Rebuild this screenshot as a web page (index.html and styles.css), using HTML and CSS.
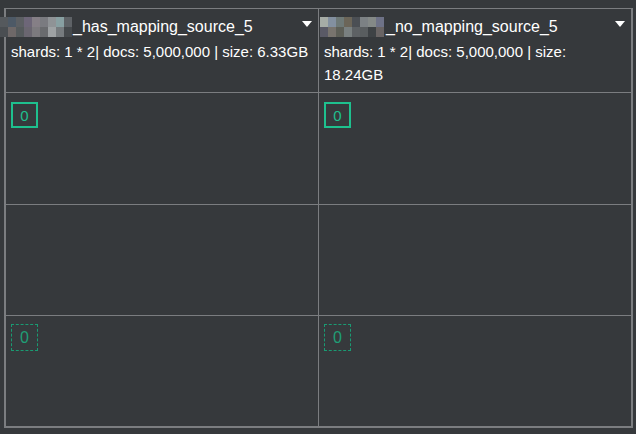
FILE: index.html
```html
<!DOCTYPE html>
<html lang="en">
<head>
    <meta charset="UTF-8">
    <meta name="viewport" content="width=device-width, initial-scale=1.0">
    <title>Shards</title>
    <link rel="stylesheet" href="styles.css">
</head>
<body>
    <div class="board">
        <!-- header row -->
        <div class="cell head">
            <div class="head-title">
                <span class="name"><span class="mosaic mosaic-a"><i></i><i></i><i></i><i></i><i></i><i></i><i></i><i></i><i></i><i></i><i></i><i></i><i></i><i></i><i></i><i></i><i></i><i></i></span>_has_mapping_source_5</span>
                <span class="caret"></span>
            </div>
            <div class="head-stats">shards: 1 * 2| docs: 5,000,000 | size: 6.33GB</div>
        </div>
        <div class="cell head">
            <div class="head-title">
                <span class="name"><span class="mosaic mosaic-b"><i></i><i></i><i></i><i></i><i></i><i></i><i></i><i></i><i></i><i></i><i></i><i></i><i></i><i></i><i></i><i></i></span>_no_mapping_source_5</span>
                <span class="caret"></span>
            </div>
            <div class="head-stats">shards: 1 * 2| docs: 5,000,000 | size: 18.24GB</div>
        </div>

        <!-- primary shards -->
        <div class="cell body-cell"><span class="shard primary">0</span></div>
        <div class="cell body-cell"><span class="shard primary">0</span></div>

        <!-- empty row -->
        <div class="cell"></div>
        <div class="cell"></div>

        <!-- replicas -->
        <div class="cell body-cell replica-row"><span class="shard replica">0</span></div>
        <div class="cell body-cell replica-row"><span class="shard replica">0</span></div>
    </div>
</body>
</html>
```

FILE: styles.css
```css
body {
    margin: 0;
    padding: 0;
    background-color: #36393c;
    font-family: "Liberation Sans", Arial, sans-serif;
    color: #ffffff;
    height: 434px;
    overflow: hidden;
}

.board {
    margin: 8px 0 0 4px;
    padding: 1px 2px 2px 2px;
    width: 625px;
    display: grid;
    grid-template-columns: 312px 312px;
    grid-template-rows: 83px 111px 110px 110px;
    gap: 1px;
    background-color: #7b7d80;
}

.cell {
    background-color: #36393c;
}

.head {
    padding: 5px 6px 0 5px;
}

.head-title {
    display: flex;
    justify-content: space-between;
    align-items: flex-start;
    font-size: 16px;
    line-height: 26px;
    white-space: nowrap;
}

.caret {
    width: 0;
    height: 0;
    margin-top: 7px;
    border-left: 5px solid transparent;
    border-right: 5px solid transparent;
    border-top: 6px solid #ffffff;
}

.head-stats {
    font-size: 15px;
    line-height: 23px;
}

/* redacted part of the index name */
.mosaic {
    display: inline-grid;
    grid-template-columns: repeat(9, 8px);
    grid-template-rows: 10px 10px;
    vertical-align: top;
    position: relative;
    top: 3px;
    filter: blur(0.6px);
}

.mosaic i {
    display: block;
}

.mosaic-a {
    margin-left: -11px;
    margin-right: 1px;
}

.mosaic-a i:nth-child(1) { background: #55595d; }
.mosaic-a i:nth-child(2) { background: #4d5966; }
.mosaic-a i:nth-child(3) { background: #5c5f63; }
.mosaic-a i:nth-child(4) { background: #6d6678; }
.mosaic-a i:nth-child(5) { background: #857f86; }
.mosaic-a i:nth-child(6) { background: #7a7b80; }
.mosaic-a i:nth-child(7) { background: #8f9396; }
.mosaic-a i:nth-child(8) { background: #88a0a2; }
.mosaic-a i:nth-child(9) { background: #5e6266; }
.mosaic-a i:nth-child(10) { background: #4a4e52; }
.mosaic-a i:nth-child(11) { background: #6e6868; }
.mosaic-a i:nth-child(12) { background: #555a5c; }
.mosaic-a i:nth-child(13) { background: #6a6670; }
.mosaic-a i:nth-child(14) { background: #7c7a7e; }
.mosaic-a i:nth-child(15) { background: #696b6e; }
.mosaic-a i:nth-child(16) { background: #9ea2a4; }
.mosaic-a i:nth-child(17) { background: #767b7e; }
.mosaic-a i:nth-child(18) { background: #45494c; }

.mosaic-b {
    grid-template-columns: repeat(8, 8px);
    margin-left: -4px;
    margin-right: 2px;
}

.mosaic-b i:nth-child(1) { background: #a6aca6; }
.mosaic-b i:nth-child(2) { background: #8390a0; }
.mosaic-b i:nth-child(3) { background: #6e7977; }
.mosaic-b i:nth-child(4) { background: #6b6558; }
.mosaic-b i:nth-child(5) { background: #4b4f54; }
.mosaic-b i:nth-child(6) { background: #7c8184; }
.mosaic-b i:nth-child(7) { background: #848987; }
.mosaic-b i:nth-child(8) { background: #6e7287; }
.mosaic-b i:nth-child(9) { background: #5a5a66; }
.mosaic-b i:nth-child(10) { background: #78746e; }
.mosaic-b i:nth-child(11) { background: #5d5f57; }
.mosaic-b i:nth-child(12) { background: #798080; }
.mosaic-b i:nth-child(13) { background: #5d6164; }
.mosaic-b i:nth-child(14) { background: #595d5f; }
.mosaic-b i:nth-child(15) { background: #3e4245; }
.mosaic-b i:nth-child(16) { background: #696464; }

.body-cell {
    padding: 9px 5px;
}

.replica-row {
    padding-top: 8px;
}

.shard {
    display: inline-flex;
    align-items: center;
    justify-content: center;
    box-sizing: border-box;
    width: 27px;
    font-size: 15px;
}

.primary {
    height: 26px;
    border: 2px solid #1ec08e;
    color: #1ec08e;
}

.replica {
    height: 27px;
    border: 1px dashed #1a9a72;
    color: #1f9e76;
    font-size: 16px;
}
```
